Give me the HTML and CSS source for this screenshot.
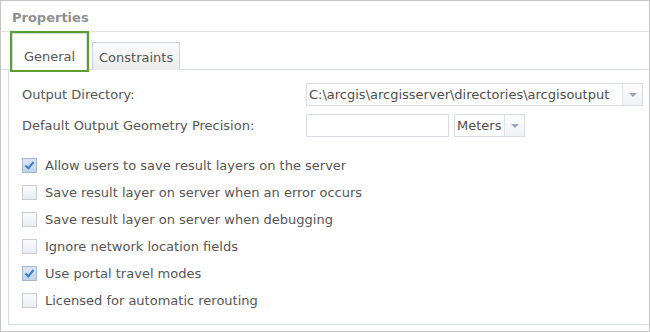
FILE: index.html
```html
<!DOCTYPE html>
<html lang="en">
<head>
    <meta charset="UTF-8">
    <meta name="viewport" content="width=device-width, initial-scale=1.0">
    <title>Properties</title>
    <link rel="stylesheet" href="styles.css">
</head>
<body>
    <div class="frame">
        <div class="title">Properties</div>

        <div class="tabs">
            <div class="tab active">General</div>
            <div class="tab">Constraints</div>
        </div>

        <div class="panel">
            <div class="fields">
                <label class="field-label">Output Directory:</label>
                <div class="select wide">
                    <span class="select-value">C:\arcgis\arcgisserver\directories\arcgisoutput</span>
                    <span class="select-arrow"></span>
                </div>

                <label class="field-label">Default Output Geometry Precision:</label>
                <div class="precision">
                    <div class="text-input"></div>
                    <div class="select units">
                        <span class="select-value">Meters</span>
                        <span class="select-arrow"></span>
                    </div>
                </div>
            </div>

            <ul class="checklist">
                <li><span class="box checked"></span>Allow users to save result layers on the server</li>
                <li><span class="box"></span>Save result layer on server when an error occurs</li>
                <li><span class="box"></span>Save result layer on server when debugging</li>
                <li><span class="box"></span>Ignore network location fields</li>
                <li><span class="box checked"></span>Use portal travel modes</li>
                <li><span class="box"></span>Licensed for automatic rerouting</li>
            </ul>
        </div>
    </div>
</body>
</html>
```

FILE: styles.css
```css
/* Base */
body {
    margin: 0;
    font-family: "DejaVu Sans", Verdana, sans-serif;
    font-size: 13px;
    color: #555;
    background-color: #fff;
}

/* Outer frame */
.frame {
    width: 650px;
    height: 332px;
    box-sizing: border-box;
    border: 1px solid #c6c6c6;
    display: flex;
    flex-direction: column;
}

/* Title */
.title {
    height: 31px;
    box-sizing: border-box;
    padding: 9px 0 0 11px;
    font-weight: bold;
    font-size: 13px;
    color: #909090;
    border-bottom: 1px solid #e2e2e2;
}

/* Tabs */
.tabs {
    display: flex;
    align-items: flex-end;
    height: 38px;
    box-sizing: border-box;
    padding-left: 11px;
    border-bottom: 1px solid #d5dbe2;
}

.tab {
    height: 28px;
    box-sizing: border-box;
    padding: 1px 6px 0;
    margin-right: 4px;
    margin-bottom: -1px;
    display: flex;
    align-items: center;
    border: 1px solid #cdd2d9;
    border-bottom: none;
    background: linear-gradient(#fbfbfb, #ececec);
    color: #555;
}

.tab.active {
    height: 37px;
    width: 75px;
    justify-content: center;
    padding-top: 9px;
    background: #fff;
    border-color: #d6dce4;
    outline: 2px solid #5a9e2e;
    margin-right: 5px;
}

/* Panel */
.panel {
    flex: 1;
    margin: 0 0 6px 7px;
    border-left: 1px solid #d5dbe2;
    border-bottom: 1px solid #d5dbe2;
    padding: 13px 6px 0 13px;
}

.fields {
    display: grid;
    grid-template-columns: 284px 1fr;
    row-gap: 8px;
    align-items: center;
}

.field-label {
    color: #555;
}

.select {
    display: flex;
    height: 23px;
    box-sizing: border-box;
    border: 1px solid #d9dde3;
    background: #fff;
}

.select-value {
    flex: 1;
    padding-left: 2px;
    line-height: 21px;
    white-space: nowrap;
    overflow: hidden;
    color: #4d4d4d;
}

.select-arrow {
    width: 19px;
    border-left: 1px solid #e0e3e8;
    background: linear-gradient(#fdfdfd, #f1f2f4);
    position: relative;
}

.select-arrow::after {
    content: "";
    position: absolute;
    left: 6px;
    top: 9px;
    border-left: 4px solid transparent;
    border-right: 4px solid transparent;
    border-top: 4px solid #97a6b8;
}

.wide {
    width: 337px;
}

.precision {
    display: flex;
    gap: 5px;
}

.text-input {
    width: 143px;
    height: 23px;
    box-sizing: border-box;
    border: 1px solid #d9dde3;
}

.units {
    width: 71px;
}

/* Checkboxes */
.checklist {
    list-style: none;
    margin: 15px 0 0 0;
    padding: 0;
}

.checklist li {
    height: 27px;
    display: flex;
    align-items: center;
}

.box {
    width: 15px;
    height: 15px;
    box-sizing: border-box;
    margin-right: 8px;
    border: 1px solid #c8cdd4;
    background: linear-gradient(#fbfcfd, #e9edf2);
}

.box.checked {
    border-color: #a3b6cc;
    background: linear-gradient(#dce7f4, #bfd3ea);
    position: relative;
}

.box.checked::after {
    content: "";
    position: absolute;
    left: 4px;
    top: 1px;
    width: 3px;
    height: 7px;
    border-right: 2px solid #3a7bd0;
    border-bottom: 2px solid #3a7bd0;
    transform: rotate(40deg);
}
```
